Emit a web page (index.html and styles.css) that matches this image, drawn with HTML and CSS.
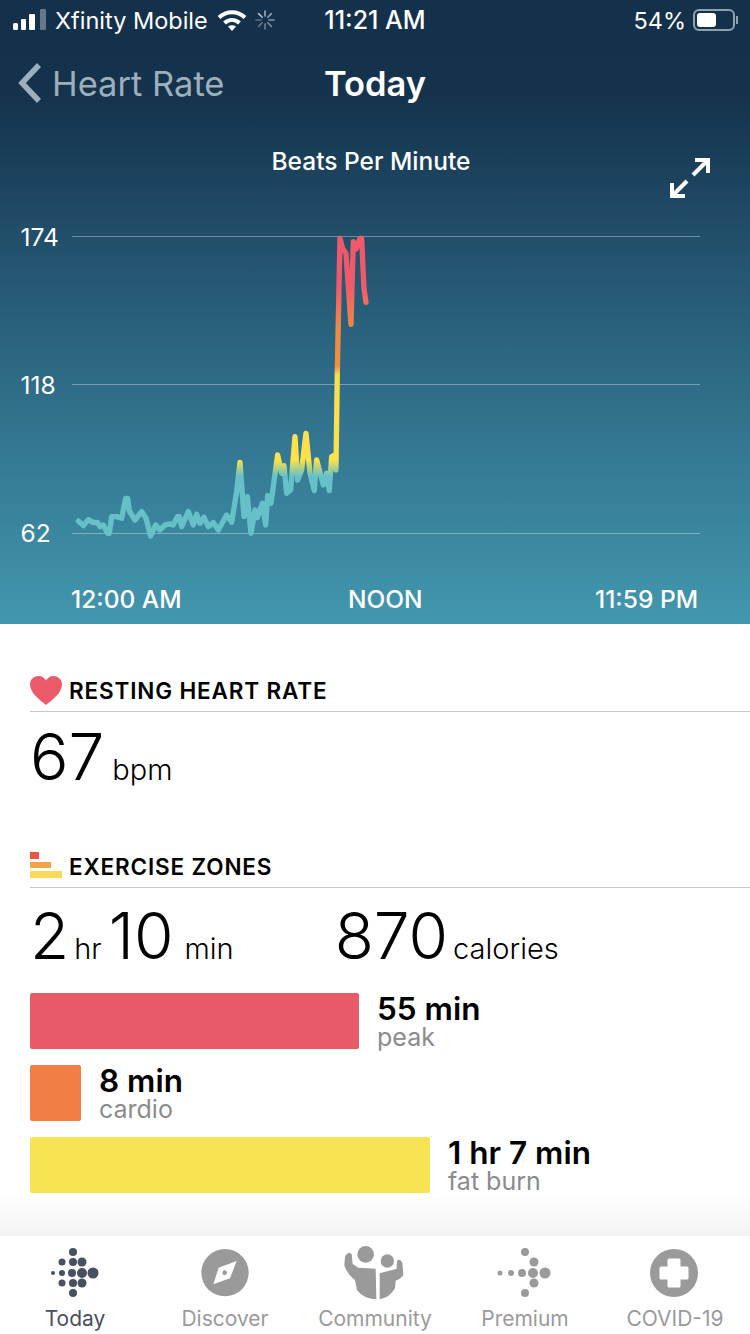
FILE: index.html
```html
<!DOCTYPE html>
<html>
    <head>
        <title>Heart Rate</title>
        <link rel="stylesheet" href="styles.css">
    </head>
    <body>
        <section class="hero">
            <div class="status-bar">
                <div class="status-left">
                    <svg class="signal" viewBox="0 0 34 22">
                        <rect x="0" y="14" width="5" height="7" rx="1.5" fill="#fff"/>
                        <rect x="8" y="10" width="5" height="11" rx="1" fill="#fff"/>
                        <rect x="16" y="5" width="6" height="16" rx="1" fill="#fff"/>
                        <rect x="27" y="0" width="6" height="21" rx="1" fill="#fff" fill-opacity=".35"/>
                    </svg>
                    <span class="carrier">Xfinity Mobile</span>
                    <svg class="wifi" viewBox="0 0 30 22">
                        <path d="M2 8.500C9.500 1.500 20.500 1.500 28 8.500" fill="none" stroke="#fff" stroke-width="4"/>
                        <path d="M7.500 14C12 10 18 10 22.500 14" fill="none" stroke="#fff" stroke-width="4"/>
                        <path d="M11 17.500C13.500 15.800 16.500 15.800 19 17.500L15 22Z" fill="#fff"/>
                    </svg>
                    <svg class="spinner" viewBox="0 0 20 20" stroke="#fff" stroke-width="1.600" stroke-linecap="round">
                        <path d="M10 1V6" stroke-opacity=".6"/>
                        <path d="M16.400 3.600L12.800 7.200" stroke-opacity=".55"/>
                        <path d="M19 10H14" stroke-opacity=".5"/>
                        <path d="M16.400 16.400L12.800 12.800" stroke-opacity=".45"/>
                        <path d="M10 19V14" stroke-opacity=".4"/>
                        <path d="M3.600 16.400L7.200 12.800" stroke-opacity=".35"/>
                        <path d="M1 10H6" stroke-opacity=".3"/>
                        <path d="M3.600 3.600L7.200 7.200" stroke-opacity=".7"/>
                    </svg>
                </div>
                <div class="clock">11:21 AM</div>
                <div class="status-right">
                    <span class="percent">54%</span>
                    <div class="battery"><div class="battery-level"></div></div>
                    <div class="battery-nub"></div>
                </div>
            </div>
            <div class="nav-bar">
                <div class="back">
                    <svg class="chevron" viewBox="0 0 24 42">
                        <path d="M21 3L4 21L21 39" fill="none" stroke="#9cafbc" stroke-width="5.500"/>
                    </svg>
                    <span>Heart Rate</span>
                </div>
                <div class="nav-title">Today</div>
            </div>
            <div class="chart-head">
                <div class="chart-title">Beats Per Minute</div>
                <svg class="expand" viewBox="0 0 40 40" fill="none" stroke="#fff" stroke-width="4">
                    <path d="M25 2H38V15"/>
                    <path d="M38 2L23 17"/>
                    <path d="M2 25V38H15"/>
                    <path d="M2 38L17 23"/>
                </svg>
            </div>
            <svg class="chart" viewBox="0 194 750 380">
                <defs>
                    <linearGradient id="zones" gradientUnits="userSpaceOnUse" x1="0" y1="0" x2="0" y2="960">
                        <stop offset="0" stop-color="#f0596a"/>
                        <stop offset=".19" stop-color="#f0596a"/>
                        <stop offset=".32" stop-color="#f08a45"/>
                        <stop offset=".44" stop-color="#ee8e42"/>
                        <stop offset=".47" stop-color="#f6e04e"/>
                        <stop offset=".735" stop-color="#fbe14a"/>
                        <stop offset=".785" stop-color="#65c1c7"/>
                        <stop offset="1" stop-color="#65c1c7"/>
                    </linearGradient>
                </defs>
                <g stroke="#fff" stroke-opacity=".35" stroke-width="1">
                    <line x1="72" y1="236.500" x2="700" y2="236.500"/>
                    <line x1="72" y1="384.500" x2="700" y2="384.500"/>
                    <line x1="72" y1="533.500" x2="700" y2="533.500"/>
                </g>
                <g class="axis">
                    <text x="20.500" y="246">174</text>
                    <text x="20.500" y="394">118</text>
                    <text x="20.500" y="542">62</text>
                </g>
                <g transform="translate(60 225) scale(.3333)">
                    <polyline fill="none" stroke="url(#zones)" stroke-width="16" stroke-linejoin="round" stroke-linecap="round" points="55,888 70,902 85,884 100,893 112,892 120,905 130,900 143,925 148,925 155,875 170,875 185,880 197,820 203,820 208,858 225,885 245,860 258,880 272,933 287,900 300,915 315,900 330,897 340,900 352,875 358,875 365,905 385,860 400,900 410,868 420,895 432,877 445,905 460,893 475,915 500,870 515,892 530,800 540,712 552,875 562,815 573,925 585,855 592,878 607,835 617,900 623,812 633,835 653,690 665,745 672,722 680,805 692,795 705,635 713,765 725,735 738,625 750,745 763,797 770,705 790,780 800,745 808,797 815,695 825,690 828,735 832,440 840,40 848,72 858,85 873,298 880,50 888,72 900,40 905,40 912,190 918,232"/>
                </g>
            </svg>
            <div class="time-axis">
                <span>12:00 AM</span>
                <span class="noon">NOON</span>
                <span>11:59 PM</span>
            </div>
        </section>

        <main class="content">
            <div class="section-head">
                <svg class="heart" viewBox="0 0 32 29">
                    <path d="M16 29C10 24 0 17 0 8.500C0 3.500 4 0 8.500 0C11.800 0 14.500 1.800 16 4.500C17.500 1.800 20.200 0 23.500 0C28 0 32 3.500 32 8.500C32 17 22 24 16 29Z" fill="#ea5a68"/>
                </svg>
                <h2>RESTING HEART RATE</h2>
            </div>
            <div class="stat resting">
                <span class="num">67</span><span class="unit">bpm</span>
            </div>

            <div class="section-head zones-head">
                <div class="zones-icon">
                    <div class="zi zi-peak"></div>
                    <div class="zi zi-cardio"></div>
                    <div class="zi zi-fat"></div>
                </div>
                <h2>EXERCISE ZONES</h2>
            </div>
            <div class="stat totals">
                <div class="stat-group">
                    <span class="num">2</span><span class="unit unit-hr">hr</span>
                    <span class="num">10</span><span class="unit unit-min">min</span>
                </div>
                <div class="stat-group">
                    <span class="num">870</span><span class="unit unit-cal">calories</span>
                </div>
            </div>

            <div class="zone-list">
                <div class="zone">
                    <div class="bar bar-peak"></div>
                    <div class="zone-text"><b>55 min</b><span>peak</span></div>
                </div>
                <div class="zone">
                    <div class="bar bar-cardio"></div>
                    <div class="zone-text"><b>8 min</b><span>cardio</span></div>
                </div>
                <div class="zone">
                    <div class="bar bar-fat"></div>
                    <div class="zone-text"><b>1 hr 7 min</b><span>fat burn</span></div>
                </div>
            </div>
            <div class="fade"></div>
        </main>

        <nav class="tabs">
            <div class="tab active">
                <svg viewBox="-40 -33 80 65" fill="#47505f">
                    <circle cx="-2" cy="-21" r="4"/>
                    <circle cx="-13" cy="-11" r="3.500"/><circle cx="-2" cy="-11" r="4"/><circle cx="7" cy="-11" r="4.500"/>
                    <circle cx="-22" cy="0" r="2"/><circle cx="-13" cy="0" r="3"/><circle cx="-3" cy="0" r="4"/><circle cx="7" cy="0" r="5"/><circle cx="18" cy="0" r="5.500"/>
                    <circle cx="-13" cy="10" r="3.500"/><circle cx="-2" cy="10" r="4"/><circle cx="7" cy="10" r="4.500"/>
                    <circle cx="-2" cy="20" r="4"/>
                </svg>
                <span>Today</span>
            </div>
            <div class="tab">
                <svg viewBox="-15 0 240 195">
                    <circle cx="105" cy="98" r="71" fill="#9a9a9a"/>
                    <path d="M140 63L120 115L70 133L86 83Z" fill="#fff"/>
                    <circle cx="104" cy="98" r="7" fill="#9a9a9a"/>
                </svg>
                <span>Discover</span>
            </div>
            <div class="tab">
                <svg viewBox="0 0 240 195" fill="#9a9a9a">
                    <circle cx="92" cy="43" r="25"/>
                    <circle cx="157" cy="63" r="20"/>
                    <path d="M30 50Q38 34 50 42L53 72L70 83L122 86L124 178Q85 176 66 150L60 121Q36 102 28 76Z"/>
                    <path d="M134 100L185 86L186 62Q195 54 202 68L205 105Q196 118 182 122L180 145Q165 172 134 178Z"/>
                </svg>
                <span>Community</span>
            </div>
            <div class="tab">
                <svg viewBox="-40 -33 80 65" fill="#9a9a9a">
                    <circle cx="0" cy="-21" r="4"/>
                    <circle cx="9" cy="-11" r="4.500"/>
                    <circle cx="-25" cy="0" r="2.500"/><circle cx="-14" cy="0" r="3"/><circle cx="-3" cy="0" r="4"/><circle cx="8" cy="0" r="5"/><circle cx="20" cy="0" r="5.500"/>
                    <circle cx="9" cy="10" r="4.500"/>
                    <circle cx="0" cy="20" r="4"/>
                </svg>
                <span>Premium</span>
            </div>
            <div class="tab">
                <svg viewBox="-39 -33 80 65">
                    <circle cx="0" cy="0" r="24" fill="#9a9a9a"/>
                    <path d="M-5 -13H5V-5H13V5H5V13H-5V5H-13V-5H-5Z" fill="#fff" stroke="#fff" stroke-width="3" stroke-linejoin="round"/>
                </svg>
                <span>COVID-19</span>
            </div>
        </nav>
    </body>
</html>
```

FILE: styles.css
```css
html, body {
    margin: 0;
    height: 1334px;
    overflow: hidden;
}
body {
    width: 750px;
    display: flex;
    flex-direction: column;
    background: #fff;
    font-family: "Inter", "Roboto", sans-serif;
    color: #000;
}

/* top blue panel */
.hero {
    height: 624px;
    flex: none;
    color: #fff;
    background: linear-gradient(#14304a 0, #15334d 100px, #2b6480 340px, #4297ae 624px);
}
.status-bar {
    height: 40px;
    display: grid;
    grid-template-columns: 1fr auto 1fr;
    align-items: center;
    padding: 0 12px 0 13px;
    font-size: 23.5px;
}
.status-left, .status-right {
    display: flex;
    align-items: center;
}
.status-right {
    justify-content: flex-end;
}
.signal {
    width: 34px;
    height: 22px;
}
.carrier {
    margin-left: 8px;
}
.wifi {
    width: 30px;
    height: 22px;
    margin-left: 9px;
}
.spinner {
    width: 20px;
    height: 20px;
    margin-left: 8px;
}
.clock {
    font-size: 25px;
    font-weight: 500;
    margin-right: 1px;
}
.percent {
    margin-right: 7px;
}
.battery {
    width: 34px;
    height: 14px;
    padding: 2px;
    border: 2px solid #8ea3b2;
    border-radius: 6px;
}
.battery-level {
    width: 19px;
    height: 14px;
    background: #fff;
    border-radius: 3px;
}
.battery-nub {
    width: 2px;
    height: 8px;
    margin-left: 1px;
    background: #8ea3b2;
}
.nav-bar {
    height: 88px;
    box-sizing: border-box;
    display: grid;
    grid-template-columns: 1fr auto 1fr;
    align-items: center;
    padding: 0 0 2px 18px;
    font-size: 34.5px;
}
.back {
    display: flex;
    align-items: center;
    color: #9cafbc;
}
.chevron {
    width: 24px;
    height: 42px;
    margin-right: 10px;
}
.nav-title {
    font-weight: 600;
    margin-left: -18px;
}
.chart-head {
    height: 66px;
    display: flex;
    justify-content: center;
    position: relative;
}
.chart-title {
    font-size: 24.5px;
    font-weight: 500;
    line-height: 66px;
    margin-right: 8px;
}
.expand {
    position: absolute;
    right: 40px;
    top: 30px;
    width: 40px;
    height: 40px;
}
.chart {
    display: block;
    width: 750px;
    height: 380px;
}
.axis text {
    fill: #fff;
    font-size: 24.5px;
}
.time-axis {
    display: flex;
    justify-content: space-between;
    padding: 11px 52px 0 71px;
    font-size: 24.5px;
    font-weight: 500;
    line-height: 28px;
}
.noon {
    margin-right: 6px;
}

/* white content */
.content {
    flex: 1;
    min-height: 0;
    display: flex;
    flex-direction: column;
    padding-top: 46px;
}
.section-head {
    height: 41px;
    flex: none;
    margin-left: 30px;
    display: flex;
    align-items: center;
    border-bottom: 1px solid #c8c8c8;
}
.section-head h2 {
    margin: 0 0 0 7px;
    font-size: 22.5px;
    font-weight: 600;
    letter-spacing: .85px;
}
.heart {
    width: 32px;
    height: 29px;
}
.zones-head {
    margin-top: 57px;
}
.zones-icon {
    width: 32px;
    display: flex;
    flex-direction: column;
    gap: 3px;
    margin-bottom: 3px;
}
.zi {
    height: 6.5px;
}
.zi-peak {
    width: 9px;
    background: #e8583f;
}
.zi-cardio {
    width: 21px;
    background: #f0a347;
}
.zi-fat {
    width: 32px;
    background: #f9d85a;
}
.stat {
    display: flex;
    padding-left: 30px;
}
.stat-group {
    display: flex;
    align-items: baseline;
}
.resting {
    align-items: baseline;
    padding-top: 13px;
}
.totals {
    gap: 101px;
    padding-top: 16px;
}
.num {
    font-size: 64px;
    font-weight: 300;
    line-height: 64px;
}
.unit {
    font-size: 29px;
    font-weight: 300;
    margin-left: 8px;
}
.unit-hr {
    margin: 0 7px 0 5px;
}
.unit-min {
    margin-left: 11px;
}
.unit-cal {
    margin-left: 5px;
}
.zone-list {
    display: flex;
    flex-direction: column;
    gap: 16px;
    margin-top: 25px;
    padding-left: 30px;
}
.zone {
    height: 56px;
    display: flex;
    align-items: flex-start;
    gap: 18px;
}
.bar {
    height: 56px;
    flex: none;
    border-radius: 2px;
}
.bar-peak {
    width: 329px;
    background: #e95a68;
}
.bar-cardio {
    width: 51px;
    background: #f17e45;
}
.bar-fat {
    width: 400px;
    background: #f8e354;
}
.zone-text {
    display: flex;
    flex-direction: column;
}
.zone-text b {
    font-size: 31.5px;
    font-weight: 600;
    line-height: 31px;
}
.zone-text span {
    font-size: 25px;
    line-height: 26px;
    color: #8b8b8b;
}
.fade {
    flex: 1;
    background: linear-gradient(#fff, #f3f3f3);
}

/* bottom tabs */
.tabs {
    height: 98px;
    flex: none;
    display: grid;
    grid-template-columns: repeat(5, 150px);
    background: #fff;
}
.tab {
    display: flex;
    flex-direction: column;
    align-items: center;
    padding-top: 4px;
    font-size: 21px;
    color: #9a9a9a;
}
.tab svg {
    width: 80px;
    height: 65px;
}
.tab span {
    line-height: 28px;
}
.tab.active {
    color: #47505f;
}
```
